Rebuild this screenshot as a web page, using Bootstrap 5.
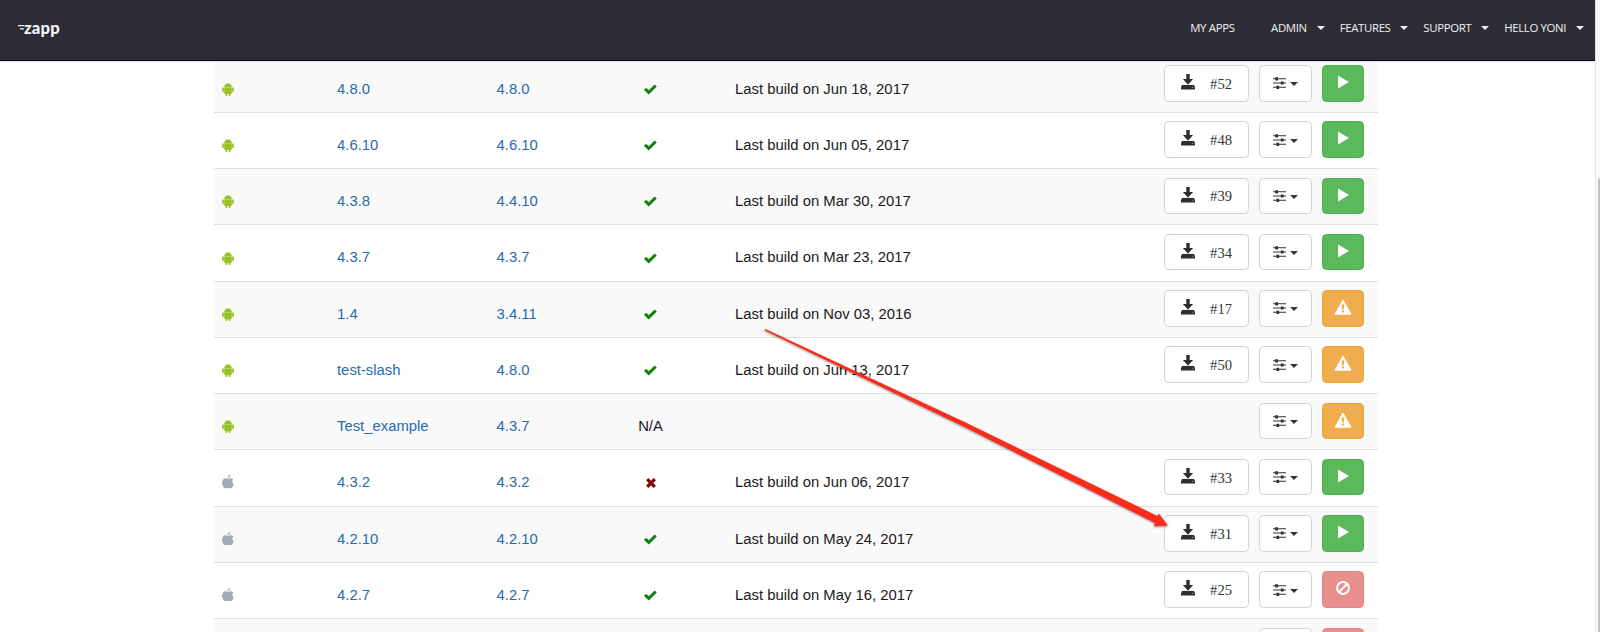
<!DOCTYPE html>
<html lang="en">
<head>
<meta charset="utf-8">
<meta name="viewport" content="width=device-width, initial-scale=1">
<title>Zapp</title>
<link href="https://cdn.jsdelivr.net/npm/bootstrap@5.3.0/dist/css/bootstrap.min.css" rel="stylesheet">
<style>
body{font-family:"Liberation Sans",Arial,sans-serif;font-size:14.85px;line-height:20px;color:#1a1a1a;height:632px;overflow:hidden;background:#fff}
.page-frame{height:632px;overflow:hidden}
.page-main{width:1595px}
.topbar{height:61px;background:#2d2c36;border-bottom:1px solid #0e0b20;padding:0 11px 4px 18px;box-shadow:0 1px 0 #e3e1e8;z-index:2;position:relative}
.brand-name{font-family:Lato,sans-serif;font-weight:900;font-size:16.6px;line-height:20px;color:#f4f4f4;letter-spacing:.2px}
.menu{font-family:"Open Sans",sans-serif;font-size:11.4px;line-height:16px;color:#f0f0f2;gap:15px;letter-spacing:-.34px}
.menu a{color:inherit;text-decoration:none;white-space:nowrap}
.gap-wide{margin-right:21.5px}
.caret-sm{width:0;height:0;border:4.5px solid transparent;border-top-color:currentColor;border-bottom:0;margin-left:9.8px}
.list-area{margin-left:214px;width:1163.5px;margin-top:-4.3px}
.build-row{display:grid;grid-template-columns:123px 159.5px 118px 72px 48.5px 1fr;height:56.25px;border-bottom:1px solid #dfdfdf;padding:0 13.5px 0 0}
.build-row:nth-child(odd){background:#f9f9f9}
.build-row>div{padding-top:21.9px}
.build-row>.tools{padding-top:8.4px;gap:10.5px}
.build-row a{color:#2a6bab;text-decoration:none}
.os-cell{padding-left:8px}
.os-cell svg,.state svg{display:block;margin-top:4.4px}
.os-cell .ic-apple{margin-top:3px}
.state svg{margin:5.400px auto 0}
.tools .built{padding-top:13.5px}
.tool{height:36.5px;border:1px solid #d2d2d2;border-radius:4.5px;background:#fff;color:#333;padding:0}
.tool-dl{width:84.5px;padding:0 15.5px 0 15.5px;font-family:"Liberation Serif",serif;font-size:14.6px}
.tool-dl span{padding-top:3px}
.tool-dl svg,.tool-act svg{margin-bottom:2.5px}
.tool-set{width:52.5px;gap:4px}
.tool-act,.tool-act:hover{width:42px;color:#fff}
.act-go{background:#5cb85c;border-color:#4cae4c}
.act-warn{background:#f0ad4e;border-color:#eea236}
.act-stop{background:#e68f8c;border-color:#e28582}
.tool-set .caret-sm{margin:2px 0 0}
.scroll-rail{width:5px;height:632px;background:#fafafa;border-left:1px solid #e4e4e4;padding:178px 0 0 2px}
.scroll-rail div{height:454px;background:#c1c1c1;border-top-left-radius:2px}
.pointer-arrow{position:absolute;left:0;top:0;z-index:3;pointer-events:none;filter:drop-shadow(0 1px 1px rgba(0,0,0,.45))}
</style>
<script src="https://cdn.jsdelivr.net/npm/bootstrap@5.3.0/dist/js/bootstrap.bundle.min.js"></script>
</head>
<body>
<svg width="0" height="0" class="d-none">
  <symbol id="i-android" viewBox="0 0 12 13"><path fill="#97c024" d="M2.1 4.200C2.200 2.600 3 1.400 4.200.9L3.700.2l.3-.2.700.700a4 4 0 0 1 2.600 0L8 0l.3.2-.5.7c1.200.5 2 1.700 2.100 3.300zM2.200 4.500h7.600v5.700q0 .6-.6.6H8.400v1.400q0 .8-.9.8t-.9-.8v-1.400H5.400v1.400q0 .8-.9.8t-.9-.8v-1.400H2.800q-.6 0-.6-.6z"/><path fill="#a5ca48" d="M0 5.200q0-.9 1-.9t1 .9v3q0 .9-1 .9t-1-.9zM10 5.200q0-.9 1-.9t1 .9v3q0 .9-1 .9t-1-.9z"/><path stroke="#b9d777" stroke-width=".4" d="M2.200 4.350h7.600"/></symbol>
  <symbol id="i-apple" viewBox="0 0 12 13.600"><path fill="#a3adb3" d="M8.300 0c.1 1.500-1 2.900-2.500 3C5.700 1.500 6.900.2 8.300 0zM11.300 4.600C9.900 5.800 10 8.300 11.800 9.300 11.300 11.200 10 13.600 8.600 13.600c-1 0-1.300-.4-2.400-.4s-1.500.4-2.500.4C2 13.600 0 10.600 0 7.900 0 5 1.900 3.300 3.600 3.300c1 0 1.800.5 2.600.5.7 0 1.600-.6 2.900-.6.9 0 1.800.6 2.200 1.400z"/></symbol>
  <symbol id="i-check" viewBox="0 0 13 11"><path fill="#12800f" d="M0 5.900 2.100 3.700 4.800 6.300 10.600.5 12.800 2.600 4.800 10.600z"/></symbol>
  <symbol id="i-cross" viewBox="0 0 10 10"><path fill="none" stroke="#800400" stroke-width="3.200" d="M1.200 1.200 8.800 8.800M8.800 1.200 1.200 8.800"/></symbol>
  <symbol id="i-down" viewBox="0 0 14 16"><path fill="#2d2d2d" d="M5.300 0h3.400v5h3.400L7 10.800 1.900 5h3.400zM1.200 10.900h11.600q.3 0 .4.3l.8 2.300v2.100H0v-2.100l.8-2.300q.1-.3.4-.3z"/><path stroke="#aaa" stroke-width=".8" d="M10.700 13.400h1.600"/></symbol>
  <symbol id="i-sliders" viewBox="0 0 13 12"><path stroke="#333" stroke-width="1.100" d="M0 1.800h13M0 6h13M0 10.300h13"/><path fill="#333" d="M2.200.2h2.800v3.200H2.200zM7.800 4.400h2.800v3.200H7.800zM3.400 8.700h2.800v3.200H3.400z"/></symbol>
  <symbol id="i-play" viewBox="0 0 11 14"><path fill="#fff" d="M0 .6 11 7 0 13.400z"/></symbol>
  <symbol id="i-warn" viewBox="0 0 18 16"><path fill="#fff" stroke="#fff" stroke-linejoin="round" d="M9 1 17 15.200H1z"/><path fill="#f0ad4e" d="M7.600 5.500h2.800L9.800 10.500H8.200zM7.800 11.500h2.400v2H7.800z"/></symbol>
  <symbol id="i-ban" viewBox="0 0 14 14"><circle cx="7" cy="7" r="5.900" fill="none" stroke="#fff" stroke-width="2"/><path stroke="#fff" stroke-width="2" d="M2.800 11.200 11.200 2.800"/></symbol>
</svg>
<div class="page-frame d-flex">
  <div class="page-main">
    <nav class="topbar d-flex align-items-center justify-content-between">
      <div class="d-flex align-items-center">
        <svg width="6" height="8" viewBox="0 0 6 8"><path stroke="#eee" stroke-width="1.300" d="M0 1.600h6M2 4.800h4"/></svg>
        <span class="brand-name">zapp</span>
      </div>
      <div class="menu d-flex align-items-center">
        <a href="#" class="gap-wide">MY APPS</a>
        <a href="#" class="d-flex align-items-center">ADMIN<i class="caret-sm"></i></a>
        <a href="#" class="d-flex align-items-center">FEATURES<i class="caret-sm"></i></a>
        <a href="#" class="d-flex align-items-center">SUPPORT<i class="caret-sm"></i></a>
        <a href="#" class="d-flex align-items-center">HELLO YONI<i class="caret-sm"></i></a>
      </div>
    </nav>
    <div class="list-area" id="builds"></div>
  </div>
  <div class="scroll-rail"><div></div></div>
</div>
<svg class="pointer-arrow" width="1600" height="632" viewBox="0 0 1600 632"><path fill="#fd2b1a" d="M765.300 329 965 422.300 1157.300 515.900 1158.700 513.500 1168 525.400 1154 526.200 1155 523 965 427.200 764.700 330.400z"/></svg>
<script>
const builds = [
  ["android","4.8.0","4.8.0","check","Jun 18, 2017","52","go"],
  ["android","4.6.10","4.6.10","check","Jun 05, 2017","48","go"],
  ["android","4.3.8","4.4.10","check","Mar 30, 2017","39","go"],
  ["android","4.3.7","4.3.7","check","Mar 23, 2017","34","go"],
  ["android","1.4","3.4.11","check","Nov 03, 2016","17","warn"],
  ["android","test-slash","4.8.0","check","Jun 13, 2017","50","warn"],
  ["android","Test_example","4.3.7","","","","warn"],
  ["apple","4.3.2","4.3.2","cross","Jun 06, 2017","33","go"],
  ["apple","4.2.10","4.2.10","check","May 24, 2017","31","go"],
  ["apple","4.2.7","4.2.7","check","May 16, 2017","25","stop"],
  ["apple","","","","","","stop"]
];
const icon = (n, w, h) => `<svg class="ic-${n}" width="${w}" height="${h}"><use href="#i-${n}"/></svg>`;
const os = {android: icon("android",12,13), apple: icon("apple",12,13.6)};
const state = {check: icon("check",13,11), cross: icon("cross",10,10), "": "N/A"};
const act = {go: icon("play",11,14), warn: icon("warn",18,16), stop: icon("ban",14,14)};
document.getElementById("builds").innerHTML = builds.map(([o,v,s,c,d,n,a]) => `
  <div class="build-row">
    <div class="os-cell">${v ? os[o] : ""}</div>
    <div><a href="#">${v}</a></div>
    <div><a href="#">${s}</a></div>
    <div class="state text-center">${v ? state[c] : ""}</div>
    <div></div>
    <div class="tools d-flex justify-content-end">
      <span class="me-auto text-nowrap built">${d ? "Last build on " + d : ""}</span>
      ${n ? `<button class="btn tool tool-dl d-flex align-items-center justify-content-between">${icon("down",14,16)}<span>#${n}</span></button>` : ""}
      <button class="btn tool tool-set d-flex align-items-center justify-content-center">${icon("sliders",13,12)}<i class="caret-sm"></i></button>
      <button class="btn tool tool-act act-${a} d-flex align-items-center justify-content-center">${act[a]}</button>
    </div>
  </div>`).join("");
</script>
</body>
</html>
